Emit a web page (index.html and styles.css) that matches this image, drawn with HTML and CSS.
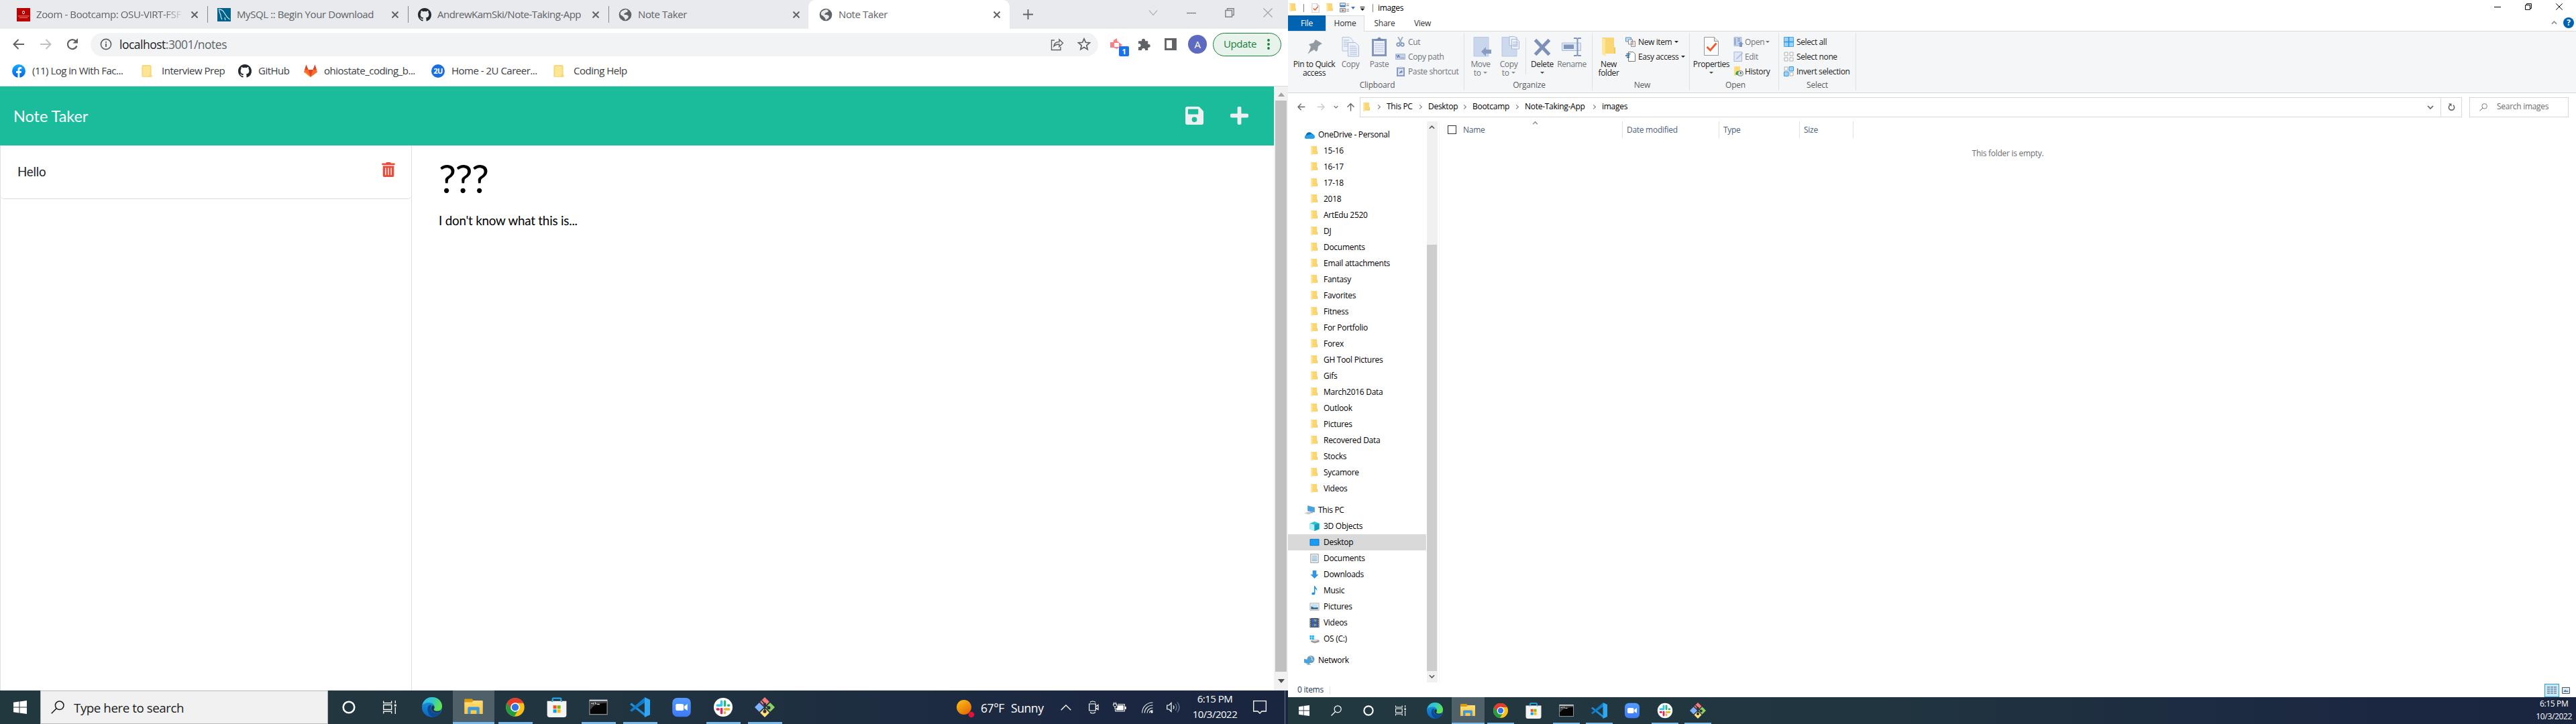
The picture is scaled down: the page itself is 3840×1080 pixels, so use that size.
FILE: index.html
```html
<!DOCTYPE html>
<html lang="en">
<head>
<meta charset="utf-8">
<title>Note Taker</title>
<link rel="stylesheet" href="styles.css">
</head>
<body>
<svg class="defs" width="0" height="0">
<defs>
<linearGradient id="gEdge" x1="0" y1="0" x2="1" y2="0.4"><stop offset="0" stop-color="#2fb4f0"/><stop offset=".55" stop-color="#35c9c4"/><stop offset="1" stop-color="#62e34e"/></linearGradient>
<linearGradient id="gEdge2" x1="0" y1="0" x2="0" y2="1"><stop offset="0" stop-color="#1b9de2"/><stop offset="1" stop-color="#0b62bd"/></linearGradient>
<linearGradient id="gFold" x1="0" y1="0" x2="0" y2="1"><stop offset="0" stop-color="#ffdd75"/><stop offset="1" stop-color="#fdc53c"/></linearGradient>
<linearGradient id="gSun" x1="0" y1="0" x2=".7" y2="1"><stop offset="0" stop-color="#fcc419"/><stop offset="1" stop-color="#e66a05"/></linearGradient>
<linearGradient id="gZoom" x1="0" y1="0" x2="0" y2="1"><stop offset="0" stop-color="#549bff"/><stop offset="1" stop-color="#3d79f5"/></linearGradient>
<linearGradient id="gFb" x1="0" y1="0" x2="0" y2="1"><stop offset="0" stop-color="#18acfe"/><stop offset="1" stop-color="#0163e0"/></linearGradient>
</defs>
<symbol id="x" viewBox="0 0 12 12"><path d="M1.5 1.5l9 9M10.5 1.5l-9 9" fill="none" stroke="currentColor" stroke-width="2"/></symbol>
<symbol id="globe" viewBox="0 0 20 20"><circle cx="10" cy="10" r="9.3" fill="#5f6368"/><path d="M8 3l3-1 3 2-1 2-3 1-2 2 1 1 3 0 3 2-1 3-4 3-1-3-3-3-3-2c-1-4 2-6 5-7z" fill="#fff" opacity=".85"/></symbol>
<symbol id="gh" viewBox="0 0 16 16"><path fill="#24292f" d="M8 0C3.58 0 0 3.58 0 8c0 3.54 2.29 6.53 5.47 7.59.4.07.55-.17.55-.38 0-.19-.01-.82-.01-1.49-2.01.37-2.53-.49-2.69-.94-.09-.23-.48-.94-.82-1.13-.28-.15-.68-.52-.01-.53.63-.01 1.08.58 1.23.82.72 1.21 1.87.87 2.33.66.07-.52.28-.87.51-1.07-1.78-.2-3.64-.89-3.64-3.95 0-.87.31-1.59.82-2.15-.08-.2-.36-1.02.08-2.12 0 0 .67-.21 2.2.82a7.6 7.6 0 014 0c1.53-1.04 2.2-.82 2.2-.82.44 1.1.16 1.92.08 2.12.51.56.82 1.27.82 2.15 0 3.07-1.87 3.75-3.65 3.95.29.25.54.73.54 1.48 0 1.07-.01 1.93-.01 2.2 0 .21.15.46.55.38A8 8 0 0016 8c0-4.42-3.58-8-8-8z"/></symbol>
<symbol id="bfold" viewBox="0 0 16 20"><path d="M0 2q0-2 2-2h11q2 0 2 2v13l1 1v2q0 1-2 1H2q-2 0-2-2z" fill="#f9d877"/><path d="M2 2h11v13h-2v3H2z" fill="#fde596"/></symbol>
<symbol id="fold" viewBox="0 0 20 28"><path d="M0 0h18v14l2 1v9H4z" fill="#f3c65c"/><path d="M4 0h14v24H4z" fill="#fbd674"/><path d="M0 0l5 2v22l1 4-6-3z" fill="#ffe69c"/></symbol>
<symbol id="check" viewBox="0 0 22 28"><path d="M.5.5h15l6 6v21H.5z" fill="#fbfbfb" stroke="#999"/><path d="M15.500.5v6h6" fill="#e6e6e6" stroke="#999"/><path d="M4.500 15l5 5 9-10.500" fill="none" stroke="#f1592a" stroke-width="2.800"/></symbol>
<symbol id="win" viewBox="0 0 20 20"><path fill="#fff" d="M0 2.700l8.500-1.200v8H0zM9.500 1.400L20 0v9.500H9.500zM0 10.500h8.500v8L0 17.300zM9.500 10.500H20V20l-10.500-1.400z"/></symbol>
<symbol id="mag" viewBox="0 0 20 20"><circle cx="12.700" cy="7.300" r="6.300" fill="none" stroke="currentColor" stroke-width="1.500"/><path d="M8.200 11.800L.7 19.300" stroke="currentColor" stroke-width="1.600"/></symbol>
<symbol id="cort" viewBox="0 0 20 20"><circle cx="10" cy="10" r="8.300" fill="none" stroke="#fff" stroke-width="2.600"/></symbol>
<symbol id="tview" viewBox="0 0 20 20"><path d="M.7.500v3.200h12V.500M.7 19.500v-3.200h12v3.200M.7 6.500h12v7H.7zM18.300 0v4M18.300 10v10" fill="none" stroke="#fff" stroke-width="1.300"/><path d="M16.800 5.700h3v3h-3z" fill="#fff"/></symbol>
<symbol id="edge" viewBox="0 0 24 24"><circle cx="12" cy="12" r="12" fill="url(#gEdge2)"/><path d="M.3 10C1.500 4 6 0 12 0c7 0 12 5 12 10.500 0 4-3 6-6 6-2.500 0-4-.8-4-1.800 0-.8 1-1.200 1-3.200C15 8.500 12 6.300 8.500 6.300 4.500 6.300 1.500 8 .3 10z" fill="url(#gEdge)"/><path d="M8.500 9.500C5 13 6.500 21 13 23.700c4 0 7.500-2.500 9.300-5.700-5 2.500-11 1-12-4-.3-2 .2-3 1.200-4.300-1-.6-2-.7-3-.2z" fill="#0c4a93"/><path d="M14 14.800c0 1.500 3.500 3 8.300.7l-.5 2.300C17 20 11.500 17.500 11 13.500c0-1.500.6-3 2-3.500 1.500.5 2 1.500 1.900 2.700-.3 1-.9 1.300-.9 2.100z" fill="#22363f"/></symbol>
<symbol id="expl" viewBox="0 0 24 24"><path d="M1 3q0-1 1-1h8l2 2v3H1z" fill="#dd9b0c"/><path d="M1 6h9l2-2h10q1 0 1 1v15H1z" fill="url(#gFold)"/><path d="M5 20v-7q0-1.500 1.500-1.500h11q1.500 0 1.500 1.500v7h-3.500v-4.500h-7V20z" fill="#3c97de"/></symbol>
<symbol id="chrome" viewBox="0 0 24 24"><circle cx="12" cy="12" r="11" fill="#fbc116"/><path d="M12 12L2.500 6.500A11 11 0 0121.600 6.700H12z" fill="#e33b2e"/><path d="M2.500 6.500A11 11 0 0011 23l5-8.500H8z" fill="#249a41"/><path d="M2.500 6.500l5 8.500 4.500-8.300h9.600A11 11 0 002.500 6.500z" fill="#e33b2e"/><circle cx="12" cy="12" r="5.500" fill="#fff"/><circle cx="12" cy="12" r="4.200" fill="#2f74e8"/></symbol>
<symbol id="store" viewBox="0 0 24 24"><path d="M7 7V2q0-.8.800-.8h8.400q.8 0 .8.800v5" fill="none" stroke="#1fa7ea" stroke-width="1.800"/><path d="M.5 4.500h23V21q0 3-3 3h-17q-3 0-3-3z" fill="#f4f4f4"/><path d="M6.500 4.500v1M17.500 4.500v1" stroke="#1fa7ea" stroke-width="1.800"/><path d="M7.700 9.800h4v4h-4z" fill="#f25022"/><path d="M12.500 9.800h4v4h-4z" fill="#7fba00"/><path d="M7.700 14.600h4v4h-4z" fill="#00a4ef"/><path d="M12.500 14.600h4v4h-4z" fill="#ffb900"/></symbol>
<symbol id="cmd" viewBox="0 0 24 24"><path d="M1 3h22v18H1z" fill="#8f8f8f"/><path d="M1.500 3h21v1.500h-21z" fill="#ccd3e0"/><path d="M2 5h20v15H2z" fill="#050505"/><path d="M2 5h20v2C13 7 6 9 3.500 14H2z" fill="#444"/><path d="M3.500 7.500h1.500M6 6.500v2M8 6l1.200 2.500M10.500 8.500h3" stroke="#ddd" stroke-width=".9"/></symbol>
<symbol id="code" viewBox="0 0 24 24"><path d="M0 8.500l2-1.800 16 12.800V23z" fill="#1d8fdc"/><path d="M0 15.500L17 .8l1.500 5L2 17.300z" fill="#0f7cc7"/><path d="M17.500 0L24 3v18l-6.500 3z" fill="#30a7f0"/></symbol>
<symbol id="zoomi" viewBox="0 0 24 24"><rect x="1" y=".7" width="22" height="22.600" rx="6" fill="url(#gZoom)"/><rect x="5" y="8" width="9.500" height="8" rx="1.800" fill="#fff"/><path d="M15.300 10.700L19 8v8l-3.700-2.700z" fill="#fff"/></symbol>
<symbol id="slack" viewBox="0 0 24 24"><circle cx="12" cy="12" r="11.200" fill="#fff"/><g fill="none" stroke-width="2.800" stroke-linecap="round"><path d="M10 5v4.300M5 9.800h5" stroke="#36c5f0"/><path d="M14 5v5M19 9.800h-1" stroke="#2eb67d"/><path d="M14 14.300h5M14 19v-1" stroke="#ecb22e"/><path d="M10 14v5M5 14.300h1.500" stroke="#e01e5a"/></g></symbol>
<symbol id="git" viewBox="0 0 24 24"><path d="M12 0l6 6-6 6-6-6z" fill="#f57b7b"/><path d="M24 12l-6 6-6-6 6-6z" fill="#8cd161"/><path d="M12 24l-6-6 6-6 6 6z" fill="#ffe07a"/><path d="M0 12l6-6 6 6-6 6z" fill="#80b3ff"/><path d="M8.500 4L12 8v10M12 9l5 3.500M5.500 5.500l13 13M18.500 5.500l-13 13" stroke="#26313b" stroke-width="1.300" fill="none"/><circle cx="12" cy="8.300" r="1.700" fill="#26313b"/><circle cx="12" cy="17" r="2" fill="#26313b"/><circle cx="16.800" cy="12.500" r="2" fill="#26313b"/></symbol>
<symbol id="up" viewBox="0 0 10 6"><path d="M1 5l4-4 4 4" fill="none" stroke="currentColor" stroke-width="1.700"/></symbol>
<symbol id="dn" viewBox="0 0 10 6"><path d="M1 1l4 4 4-4" fill="none" stroke="currentColor" stroke-width="1.700"/></symbol>
<symbol id="restore" viewBox="0 0 12 12"><path d="M.7 3h8.300v8.300H.7zM3 3V.7h8.300V9H9" fill="none" stroke="currentColor" stroke-width="1.200"/></symbol>
<symbol id="arrow" viewBox="0 0 18 16"><path d="M17 8H2M8.500 1L1.500 8l7 7" fill="none" stroke="currentColor" stroke-width="2"/></symbol>
<symbol id="doc" viewBox="0 0 14 16"><path d="M.5.5h13v15H.5z" fill="#f4f4f4" stroke="#8b8b8b"/><path d="M2.500 4h9M2.500 7h9M2.500 9.500h9M2.500 12h9" stroke="#4a9bd4"/></symbol>
</svg>

<main class="desktop">
<!-- Left display: browser -->
<section class="screen left">
  <div class="tabs">
    <div class="tab"><svg class="fav" viewBox="0 0 20 20"><path d="M0 0h20v20H0z" fill="#b00"/><ellipse cx="10" cy="6.500" rx="1.500" ry="2.300" fill="none" stroke="#fff"/><path d="M1.500 12h17M4 14.500h12" stroke="#e88" stroke-width="1.200"/></svg><span class="tt fade">Zoom - Bootcamp: OSU-VIRT-FSF</span><svg class="cl"><use href="#x"/></svg></div>
    <div class="tab"><svg class="fav" viewBox="0 0 20 20"><path d="M0 0h20v20H0z" fill="#00618a"/><path d="M1.500 2c5-1 8 3 10 7s4 6 7 8M3 3c-1 4 2 5 2 8s1 4 2 6M12 18l-1-4" fill="none" stroke="#cfe3ee" stroke-width="1.200"/></svg><span class="tt">MySQL :: Begin Your Download</span><svg class="cl"><use href="#x"/></svg></div>
    <div class="tab"><svg class="fav"><use href="#gh"/></svg><span class="tt long">AndrewKamSki/Note-Taking-App</span><svg class="cl"><use href="#x"/></svg></div>
    <div class="tab last"><svg class="fav"><use href="#globe"/></svg><span class="tt">Note Taker</span><svg class="cl"><use href="#x"/></svg></div>
    <div class="tab active"><svg class="fav"><use href="#globe"/></svg><span class="tt">Note Taker</span><svg class="cl"><use href="#x"/></svg></div>
    <svg class="plus" viewBox="0 0 16 16"><path d="M8 0v16M0 8h16" stroke="#5f6368" stroke-width="2"/></svg>
    <div class="wc">
      <svg viewBox="0 0 14 14"><path d="M1 3.500l6 7 6-7" fill="none" stroke="#a0a2a6" stroke-width="1.100"/></svg>
      <svg viewBox="0 0 14 14"><path d="M0 7.500h14" stroke="#7c7e82" stroke-width="1.300"/></svg>
      <svg><use href="#restore"/></svg>
      <svg viewBox="0 0 14 14"><path d="M.5.500l13 13M13.500.500l-13 13" stroke="#a0a2a6" stroke-width="1.100"/></svg>
    </div>
  </div>
  <div class="tools">
    <svg class="ar"><use href="#arrow"/></svg><svg class="ar fw"><use href="#arrow"/></svg>
    <svg class="rl" viewBox="0 0 18 18"><path d="M15.500 11.500A7 7 0 1 1 14 4.200" fill="none" stroke="#5f6368" stroke-width="2.200"/><path d="M17 0v7.500H9.500z" fill="#5f6368"/></svg>
    <div class="omni">
      <svg class="inf" viewBox="0 0 18 18"><circle cx="9" cy="9" r="7.600" fill="none" stroke="#5f6368" stroke-width="1.600"/><path d="M9 8v5M9 5v1.700" stroke="#5f6368" stroke-width="1.900"/></svg>
      <span class="url">localhost<i>:3001/notes</i></span>
      <svg class="sh" viewBox="0 0 20 20"><path d="M6 4H1.500v14.500H15V14M5 13c.5-4.500 3.500-6.500 8-6.500V3l5.500 5.300L13 13.500V10c-4 0-6 .8-8 3z" fill="none" stroke="#5f6368" stroke-width="1.400"/></svg>
      <svg class="st" viewBox="0 0 20 20"><path d="M10 1.800l2.400 5.500 6 .5-4.600 4 1.400 5.900L10 14.600l-5.200 3.100 1.400-5.900-4.600-4 6-.5z" fill="none" stroke="#5f6368" stroke-width="1.700"/></svg>
    </div>
    <div class="ext"><svg viewBox="0 0 20 20"><path d="M0 6h5V3l5-3v4l8 6-8 6-5-2H0z" fill="#fb7f80"/><path d="M6 7h7v6H6z" fill="#fff"/></svg><b>1</b></div>
    <svg class="pz" viewBox="0 0 20 20"><path d="M2 5h4.500a2.700 2.700 0 115 0H16v5a2.700 2.700 0 110 5v4.500h-4.500a2.600 2.600 0 10-5 0H1V14a2.600 2.600 0 100-4.500V5z" fill="#5f6368"/></svg>
    <svg class="sp" viewBox="0 0 18 18"><path d="M1.500 1.500h15v15h-15z" fill="#fff" stroke="#5f6368" stroke-width="2.800"/><path d="M11 2h6v14h-6z" fill="#5f6368"/></svg>
    <div class="av">A</div>
    <div class="upd"><span>Update</span><svg viewBox="0 0 4 16"><g fill="#188038"><circle cx="2" cy="2" r="1.900"/><circle cx="2" cy="8" r="1.900"/><circle cx="2" cy="14" r="1.900"/></g></svg></div>
  </div>
  <div class="marks">
    <div class="m m1"><svg viewBox="0 0 20 20"><circle cx="10" cy="10" r="10" fill="url(#gFb)"/><path d="M8.500 20v-7H6v-3h2.500V8c0-2.600 1.500-4 4-4l1.700.2v2.600h-1.400c-1.200 0-1.500.7-1.500 1.500V10h2.800l-.5 3h-2.300v7z" fill="#fff"/></svg><span>(11) Log in With Fac...</span></div>
    <div class="m m2"><svg class="bf"><use href="#bfold"/></svg><span>Interview Prep</span></div>
    <div class="m m3"><svg><use href="#gh"/></svg><span>GitHub</span></div>
    <div class="m m4"><svg viewBox="0 0 20 20"><path d="M10 19L0 11.500 3.500.5 6.500 8h7l3-7.500 3.500 11z" fill="#fc6d26"/><path d="M3.500.5L6.500 8h-5.300zM16.500.5L13.500 8h5.300zM10 19L6.500 8h7z" fill="#e24329"/><path d="M0 11.500L10 19 3 12z" fill="#fca326"/></svg><span>ohiostate_coding_b...</span></div>
    <div class="m m5"><div class="u2">2U</div><span>Home - 2U Career...</span></div>
    <div class="m"><svg class="bf"><use href="#bfold"/></svg><span>Coding Help</span></div>
  </div>
  <div class="view">
    <div class="app">
      <header class="nav"><span class="brand">Note Taker</span>
        <svg class="save" viewBox="0 0 448 448"><path fill="#ecf0f1" d="M434 98L350 14a48 48 0 00-34-14H48A48 48 0 000 48v352a48 48 0 0048 48h352a48 48 0 0048-48V132a48 48 0 00-14-34zM224 384a64 64 0 110-128 64 64 0 010 128zm96-304v100a12 12 0 01-12 12H76a12 12 0 01-12-12V76a12 12 0 0112-12h228a12 12 0 018 4l5 4a12 12 0 013 8z"/></svg>
        <svg class="add" viewBox="0 0 448 448"><path fill="#ecf0f1" d="M416 176H272V32a32 32 0 00-32-32h-32a32 32 0 00-32 32v144H32a32 32 0 00-32 32v32a32 32 0 0032 32h144v144a32 32 0 0032 32h32a32 32 0 0032-32V272h144a32 32 0 0032-32v-32a32 32 0 00-32-32z"/></svg>
      </header>
      <div class="body">
        <aside class="list"><div class="note"><span>Hello</span><svg viewBox="0 0 448 512"><path fill="#e74c3c" fill-rule="evenodd" d="M32 464a48 48 0 0048 48h288a48 48 0 0048-48V128H32zm272-256a16 16 0 0132 0v224a16 16 0 01-32 0zm-96 0a16 16 0 0132 0v224a16 16 0 01-32 0zm-96 0a16 16 0 0132 0v224a16 16 0 01-32 0zM432 32H312l-9-19a24 24 0 00-22-13H167a24 24 0 00-22 13l-9 19H16A16 16 0 000 48v32a16 16 0 0016 16h416a16 16 0 0016-16V48a16 16 0 00-16-16z"/></svg></div></aside>
        <article><h1>???</h1><p>I don't know what this is...</p></article>
      </div>
    </div>
    <div class="sb"><svg viewBox="0 0 10 6"><path d="M0 6l5-6 5 6z" fill="#a3a3a3"/></svg><div class="thumb"></div><svg viewBox="0 0 10 6"><path d="M0 0l5 6 5-6z" fill="#505050"/></svg></div>
  </div>
  <footer class="task">
    <div class="c start"><svg class="s"><use href="#win"/></svg></div>
    <div class="search"><svg><use href="#mag"/></svg><span>Type here to search</span></div>
    <div class="c"><svg class="s"><use href="#cort"/></svg></div>
    <div class="c tv"><svg class="s"><use href="#tview"/></svg></div>
    <div class="c"><svg><use href="#edge"/></svg></div>
    <div class="c on cur"><svg><use href="#expl"/></svg></div>
    <div class="c on"><svg><use href="#chrome"/></svg></div>
    <div class="c"><svg><use href="#store"/></svg></div>
    <div class="c on"><svg><use href="#cmd"/></svg></div>
    <div class="c on"><svg><use href="#code"/></svg></div>
    <div class="c"><svg><use href="#zoomi"/></svg></div>
    <div class="c on"><svg><use href="#slack"/></svg></div>
    <div class="c on"><svg><use href="#git"/></svg></div>
    <svg class="sun" viewBox="0 0 28 30"><circle cx="11" cy="11" r="11" fill="url(#gSun)"/><circle cx="22" cy="22" r="4.300" fill="#e0123c"/></svg>
    <span class="w1">67°F</span><span class="w2">Sunny</span>
    <div class="tray">
      <svg class="t1" viewBox="0 0 16 9"><path d="M.7 8.300L8 1l7.300 7.300" fill="none" stroke="#fff" stroke-width="1.300"/></svg>
      <svg class="t2" viewBox="0 0 15 20"><path d="M.7 5h9.600v10H.7zM10.500 9l3.500-2.500v7L10.500 11M2 2.500q3.500-3 8 0M2 17.500q3.500 3 8 0" fill="none" stroke="#fff" stroke-width="1.200"/></svg>
      <svg class="t3" viewBox="0 0 20 16"><path d="M7 3.500h10.500V14H3.500V9" fill="none" stroke="#fff"/><path d="M6.500 5h9.500v7.500H5V9h1.500zM18 7h1.700v4H18z" fill="#fff"/><path d="M.5 3h5v2.500L4 7H2L.5 5.500zM1.700.5v2.500M4.300.5v2.500M3 7v3" fill="none" stroke="#fff"/></svg>
      <svg class="t4" viewBox="0 0 17 17"><g fill="none" stroke="#e6e8ec" stroke-width="1.200"><path d="M.6 16.500C.6 8 7 1 16.500 1M4.300 16.500c0-6 5-11.500 12.200-11.500M8 16.500c0-4 3.500-7.500 8.500-7.500M11.500 16.500c0-2 2-4 5-4"/></g><circle cx="15" cy="15" r="1.700" fill="#fff"/></svg>
      <svg class="t5" viewBox="0 0 21 18"><path d="M.7 6h3L7 2.500v13L3.700 12h-3z" fill="none" stroke="#fff" stroke-width="1.200"/><path d="M10 6.500q2 2.500 0 5" stroke="#fff" fill="none" stroke-width="1.200"/><path d="M13 4q4 5 0 10M16 1.500q6 7.500 0 15" stroke="#78829a" fill="none" stroke-width="1.200"/></svg>
      <div class="clock"><span>6:15 PM</span><span>10/3/2022</span></div>
      <svg class="t6" viewBox="0 0 20 20"><path d="M.7.700h18.600v15.300H13L10 19l-3-3H.7z" fill="none" stroke="#fff" stroke-width="1.300"/></svg>
    </div>
  </footer>
</section>

<!-- Right display: file explorer -->
<section class="screen right">
  <div class="title">
    <svg class="q1"><use href="#fold"/></svg><hr><svg class="q2"><use href="#check"/></svg><svg class="q3"><use href="#fold"/></svg>
    <svg class="q4" viewBox="0 0 14 15"><path d="M.5.500h8v5.500h-8zM.5 8.500h8V14h-8z" fill="#bfe0f5" stroke="#888"/><path d="M1 4h7v2H1z" fill="#2f7fc0"/><path d="M3 10l4 1-3 2z" fill="#d94b2b"/><path d="M10 2h4M10 4.500h4M10 10h4M10 12.500h4" stroke="#8a8a8a"/></svg>
    <svg class="q5" viewBox="0 0 6 4"><path d="M0 0h6L3 4z" fill="#3c78b8"/></svg>
    <svg class="q6" viewBox="0 0 8 7"><path d="M0 0h8v1.200H0zM0 3h8L4 7z" fill="#111"/></svg><hr class="h2">
    <span>images</span>
    <div class="wc2"><svg viewBox="0 0 10 10"><path d="M0 5.500h10" stroke="#000"/></svg><svg><use href="#restore"/></svg><svg viewBox="0 0 10 10"><path d="M.3.300l9.400 9.400M9.700.300L.3 9.700" stroke="#000"/></svg></div>
  </div>
  <div class="rtabs"><b>File</b><span class="home">Home</span><span class="share">Share</span><span class="vw">View</span><svg class="col"><use href="#up"/></svg><i>?</i></div>
  <div class="ribbon">
    <div class="g g1"><div class="row">
      <div class="big w70 k"><svg viewBox="0 0 32 32"><path d="M18 5l10 6-2 1-4 3-1 6-2 2-5-5-7 9 4-11-3-4 7-2z" fill="#929ba1"/><path d="M14 17l-8 9 10-6z" fill="#929ba1"/></svg><span>Pin to Quick<br>access</span></div>
      <div class="big w38"><svg viewBox="0 0 32 32"><path d="M4 1.500h11l5 5V22H4z" fill="#edf2fa" stroke="#b5c2dc"/><path d="M12.500 9.500h11l5 5V30h-16z" fill="#edf2fa" stroke="#aebcd9"/><path d="M6 6h8M6 9h6M6 12h6M6 15h6M15 15h9M15 18h11M15 21h11M15 24h11M15 27h11" stroke="#a9b9d8"/></svg><span>Copy</span></div>
      <div class="big w48"><svg viewBox="0 0 32 32"><path d="M5 4h22v26H5z" fill="#8496bb"/><path d="M8 7h16v20H8z" fill="#edf2fa"/><path d="M10 7V4h3q3-5 6 0h3v3z" fill="#7488b2"/><path d="M9 11h14M9 14h14M9 17h14M9 20h14M9 23h14" stroke="#b4c3df"/></svg><span>Paste</span></div>
      <div class="smalls">
        <div><svg viewBox="0 0 15 15"><path d="M4 0l5 9M11 0L6 9" stroke="#9aa8c4" stroke-width="1.700"/><circle cx="4.500" cy="11.500" r="2.300" fill="none" stroke="#8194bd" stroke-width="1.700"/><circle cx="10.500" cy="11.500" r="2.300" fill="none" stroke="#8194bd" stroke-width="1.700"/></svg>Cut</div>
        <div><svg viewBox="0 0 15 15"><path d="M.5 3.500h14v8H.5z" fill="#c3d0e8" stroke="#a9b9d4"/><path d="M2 5l1.500 4L5 5l1.500 4M8 9.500h1M10 9.500h1M12 9.500h1" stroke="#4f6796" fill="none"/></svg>Copy path</div>
        <div><svg viewBox="0 0 15 15"><path d="M2 1.500h12V15H2z" fill="#8b9cc0"/><path d="M4 3.500h8v9.500H4zM6 0h4v2H6z" fill="#dce5f5"/><path d="M6 11q0-4 3-4V5l2 3-2 2.500V9" fill="#6f85b4"/></svg>Paste shortcut</div>
      </div></div><em>Clipboard</em></div>
    <div class="g g2"><div class="row">
      <div class="big w42"><svg viewBox="0 0 32 32"><path d="M6 1.500h22V30H6z" fill="#c9d6ec" stroke="#b9c9e4"/><path d="M17 23l7-7v4h8v6h-8v4z" fill="#8b9cbf"/></svg><span>Move<br>to <u class="d"></u></span></div>
      <div class="big w42"><svg viewBox="0 0 32 32"><path d="M6 1.500h22V30H6z" fill="#ccd9ee" stroke="#b9c9e4"/><path d="M17 .5h8l3 3V14H17zM20.500 4.500h8l3 3V19h-11z" fill="#edf2fa" stroke="#a9b9d8"/><path d="M22 9h8M22 12h8M22 15h8" stroke="#a9b9d8"/></svg><span>Copy<br>to <u class="d"></u></span></div>
      <div class="vr"></div>
      <div class="big w42 k"><svg viewBox="0 0 32 32"><path d="M5.500 5.500l21 22M26.500 5.500l-21 22" stroke="#7c90b8" stroke-width="5"/></svg><span>Delete<br><u class="d"></u></span></div>
      <div class="big w46"><svg viewBox="0 0 32 32"><path d="M1.500 10h28v11.500h-28z" fill="#e1e9f6" stroke="#a9b9d8"/><path d="M4 12.500h15v6.500H4z" fill="#8194bd"/><path d="M19 3h4l1.500 1L26 3h4M24.500 4v24M19 29h4l1.500-1 1.500 1h4" stroke="#8194bd" stroke-width="2" fill="none"/></svg><span>Rename</span></div>
      </div><em>Organize</em></div>
    <div class="g g3"><div class="row">
      <div class="big w40 k"><svg class="nf"><use href="#fold"/></svg><span>New<br>folder</span></div>
      <div class="smalls k p5">
        <div><svg viewBox="0 0 15 15"><path d="M.5 1h8v6h-8z" fill="#bfe0f5" stroke="#5f93ba"/><path d="M4.500 4h6v7h-6zM8.500 6.500h6v8h-6z" fill="#f6f6f6" stroke="#8d8d8d"/><path d="M10 9h3M10 12h3" stroke="#e58f7d"/></svg>New item <u class="d"></u></div>
        <div><svg viewBox="0 0 15 15"><path d="M4.500.500h7l3 3v11h-10z" fill="#fff" stroke="#777"/><path d="M1.500 3.500h6M0 6h6M2 8.500h4" stroke="#1c639b" stroke-width="1.300"/></svg>Easy access <u class="d"></u></div>
      </div></div><em>New</em></div>
    <div class="g g4"><div class="row">
      <div class="big w56 k"><svg class="ck"><use href="#check"/></svg><span>Properties<br><u class="d"></u></span></div>
      <div class="smalls p5 n">
        <div><svg viewBox="0 0 15 15"><path d="M1 .5h11v13H1z" fill="#c6d3ea" stroke="#a9b9d8"/><path d="M2.500 2v10M6 3h4M6 6h4" stroke="#7f94bf" stroke-width="1.500"/><path d="M9 15V11H7l4-4 4 4h-2v4z" fill="#7f94bf"/></svg>Open <u class="d"></u></div>
        <div><svg viewBox="0 0 15 15"><path d="M1 .5h11.500v14H1z" fill="#e1e9f6" stroke="#a9b9d8"/><path d="M3 12l2-3 8-8 1.500 1.500-8 8z" fill="#b5c4df"/></svg>Edit</div>
        <div class="k"><svg viewBox="0 0 15 15"><path d="M1 0h9v12l-5 1-4 1z" fill="#ffdb7a"/><path d="M3 12q1-6 6-5v7z" fill="#2aa34a"/><circle cx="10.500" cy="10.500" r="4" fill="#d9e0dd" stroke="#7b8a83"/><path d="M10.500 8v3l2-1.500" stroke="#46524c" fill="none"/></svg>History</div>
      </div></div><em>Open</em></div>
    <div class="g g5"><div class="row">
      <div class="smalls k p8">
        <div><svg viewBox="0 0 15 15"><path d="M.5.500h14v14H.5z" fill="#9bd3fa" stroke="#4ba3e8"/><path d="M7.500 0v15M0 7.500h15" stroke="#2f93e2" stroke-width="1.600"/></svg>Select all</div>
        <div><svg viewBox="0 0 15 15"><path d="M1 1h5v5H1zM9 1h5v5H9zM1 9h5v5H1zM9 9h5v5H9z" fill="#fafafa" stroke="#b0b0b0"/></svg>Select none</div>
        <div><svg viewBox="0 0 15 15"><path d="M1 1h5v5H1zM9 9h5v5H9z" fill="#fafafa" stroke="#b0b0b0"/><path d="M8 .5h6.500V7H8zM.5 8H7v6.500H.5z" fill="#9bd3fa" stroke="#3a98e4"/></svg>Invert selection</div>
      </div></div><em>Select</em></div>
  </div>
  <div class="addr">
    <svg class="a1"><use href="#arrow"/></svg><svg class="a2"><use href="#arrow"/></svg><svg class="a3"><use href="#dn"/></svg><svg class="a4"><use href="#arrow"/></svg>
    <div class="path"><svg class="pf"><use href="#fold"/></svg><s></s><span class="p1">This PC</span><s></s><span class="p2">Desktop</span><s></s><span class="p3">Bootcamp</span><s></s><span class="p4">Note-Taking-App</span><s></s><span>images</span>
      <svg class="pd"><use href="#dn"/></svg><div class="rf"><svg viewBox="0 0 12 12"><path d="M8.500 2.500a4.500 4.500 0 11-5 0" fill="none" stroke="#666" stroke-width="1.700"/><path d="M1 0h5v5z" fill="#666"/></svg></div></div>
    <div class="sbox"><svg><use href="#mag"/></svg><span>Search images</span></div>
  </div>
  <div class="main">
    <nav class="tree">
      <div class="r"><svg class="od" viewBox="0 0 16 11"><path d="M3 5A5 5 0 0112 3.500 4 4 0 0114 10H3A3 3 0 013 5z" fill="#0f6cbd"/><path d="M1 10Q0 6 4 6l4-1q3-2 5 0 3 0 3 3 0 3-3 3H3q-1.500 0-2-1z" fill="#28a1e8"/></svg>OneDrive - Personal</div>
      <div class="f"><svg><use href="#fold"/></svg>15-16</div>
      <div class="f"><svg><use href="#fold"/></svg>16-17</div>
      <div class="f"><svg><use href="#fold"/></svg>17-18</div>
      <div class="f"><svg><use href="#fold"/></svg>2018</div>
      <div class="f"><svg><use href="#fold"/></svg>ArtEdu 2520</div>
      <div class="f"><svg><use href="#fold"/></svg>DJ</div>
      <div class="f"><svg><use href="#fold"/></svg>Documents</div>
      <div class="f"><svg><use href="#fold"/></svg>Email attachments</div>
      <div class="f"><svg><use href="#fold"/></svg>Fantasy</div>
      <div class="f"><svg><use href="#fold"/></svg>Favorites</div>
      <div class="f"><svg><use href="#fold"/></svg>Fitness</div>
      <div class="f"><svg><use href="#fold"/></svg>For Portfolio</div>
      <div class="f"><svg><use href="#fold"/></svg>Forex</div>
      <div class="f"><svg><use href="#fold"/></svg>GH Tool Pictures</div>
      <div class="f"><svg><use href="#fold"/></svg>Gifs</div>
      <div class="f"><svg><use href="#fold"/></svg>March2016 Data</div>
      <div class="f"><svg><use href="#fold"/></svg>Outlook</div>
      <div class="f"><svg><use href="#fold"/></svg>Pictures</div>
      <div class="f"><svg><use href="#fold"/></svg>Recovered Data</div>
      <div class="f"><svg><use href="#fold"/></svg>Stocks</div>
      <div class="f"><svg><use href="#fold"/></svg>Sycamore</div>
      <div class="f"><svg><use href="#fold"/></svg>Videos</div>
      <div class="r gap"><svg viewBox="0 0 16 14"><path d="M5.500.500l10 2.500v7l-10-2z" fill="#3aa5ee" stroke="#8a98a5" stroke-width=".8"/><path d="M0 11.500l6-2 6 1.500-5 2.500z" fill="#c3ccd4"/><path d="M8 9l5 1v1.500l-4-1z" fill="#9aa7b3"/></svg>This PC</div>
      <div class="o"><svg viewBox="0 0 15 15"><path d="M0 3l7.500-3L15 3v9l-7.500 3L0 12z" fill="#2fc1d6"/><path d="M0 3l7.500 2v10L0 12z" fill="#b4eef2"/><path d="M7.500 5L15 3v9l-7.500 3z" fill="#0fa0bd"/></svg>3D Objects</div>
      <div class="o sel"><svg viewBox="0 0 15 15"><path d="M.5 2.500h14v10H.5z" fill="#1a9bf5" stroke="#0f74bd"/></svg>Desktop</div>
      <div class="o"><svg><use href="#doc"/></svg>Documents</div>
      <div class="o"><svg viewBox="0 0 15 15"><path d="M4.500 1h6v6.500H14L7.500 14 1 7.500h3.500z" fill="#3393e6"/></svg>Downloads</div>
      <div class="o"><svg viewBox="0 0 15 15"><path d="M7 0h1.500c0 3 4 3.500 3 8-1-3-2-3-3-3.500V12c0 3-5.500 3-5.500.5C3 10.500 5 10 7 10.500z" fill="#1793ea"/></svg>Music</div>
      <div class="o"><svg viewBox="0 0 15 15"><path d="M.5 2h14v11H.5z" fill="#fff" stroke="#a0a0a0"/><path d="M2 3.500h11v8H2z" fill="#bfe2f7"/><path d="M2 7l5 2 6-.5v3H2z" fill="#33647c"/></svg>Pictures</div>
      <div class="o"><svg viewBox="0 0 15 15"><path d="M0 0h15v15H0z" fill="#4b4b4b"/><path d="M3 1h9v6H3zM3 8h9v6H3z" fill="#2e6fd0"/><path d="M6 2l5 1-2 3zM7 9l4 2-4 2z" fill="#d9a02c"/><path d="M1.300 0v15M13.700 0v15" stroke="#ddd" stroke-dasharray="1.500 1.500"/></svg>Videos</div>
      <div class="o"><svg viewBox="0 0 15 15"><path d="M0 2h3v3H0zM3.700 2h3v3h-3zM0 5.700h3v3H0zM3.700 5.700h3v3h-3z" fill="#10b2ee"/><path d="M2 10l5-2 8 1.500v3L8 14.500l-6-2z" fill="#9a9a9a"/><path d="M2 10l5-2 8 1.500-7 2z" fill="#dcdcdc"/></svg>OS (C:)</div>
      <div class="r gap"><svg viewBox="0 0 16 14"><circle cx="10" cy="5.500" r="5.500" fill="#5d9ec6"/><path d="M8 1l4 2-1 3 3 1" stroke="#cfe8f5" fill="none"/><path d="M0 5l8 2v6L0 10z" fill="#39a9ef" stroke="#7b99ad" stroke-width=".7"/><path d="M4 13l4 1 2-1" stroke="#9ab" fill="none"/></svg>Network</div>
    </nav>
    <div class="tsb"><svg><use href="#up"/></svg><div></div><svg><use href="#dn"/></svg></div>
    <div class="files">
      <div class="cols"><i class="cb"></i><div class="c1">Name<svg><use href="#up"/></svg></div><div class="c2">Date modified</div><div class="c3">Type</div><div class="c4">Size</div></div>
      <p>This folder is empty.</p>
    </div>
  </div>
  <div class="status"><span>0 items</span><hr>
    <div class="v1"><svg viewBox="0 0 14 11"><path d="M0 1h4M0 4h4M0 7h4M0 10h4M5 1h4M5 4h4M5 7h4M5 10h4M10 1h4M10 4h4M10 7h4M10 10h4" stroke="#31536b"/></svg></div><svg class="v2" viewBox="0 0 12 10"><path d="M.5.500h11v9H.5z" fill="#dbe9f2" stroke="#555"/><path d="M2 7l3-3 2 2 1-1 2 2z" fill="#3b7a9b"/></svg>
  </div>
  <footer class="task t2r">
    <div class="c q"><svg class="s"><use href="#win"/></svg></div>
    <div class="c q"><svg class="s wh"><use href="#mag"/></svg></div>
    <div class="c q"><svg class="s"><use href="#cort"/></svg></div>
    <div class="c q z"><svg class="s"><use href="#tview"/></svg></div>
    <div class="c"><svg><use href="#edge"/></svg></div>
    <div class="c on cur"><svg><use href="#expl"/></svg></div>
    <div class="c on"><svg><use href="#chrome"/></svg></div>
    <div class="c"><svg><use href="#store"/></svg></div>
    <div class="c on"><svg><use href="#cmd"/></svg></div>
    <div class="c on"><svg><use href="#code"/></svg></div>
    <div class="c"><svg><use href="#zoomi"/></svg></div>
    <div class="c on"><svg><use href="#slack"/></svg></div>
    <div class="c on"><svg><use href="#git"/></svg></div>
    <div class="clock"><span>6:15 PM</span><span>10/3/2022</span></div>
  </footer>
</section>
</main>
</body>
</html>
```
FILE: styles.css
```css
* { box-sizing: border-box; }
body { margin: 0; background: #fff; font-family: "Open Sans", "Noto Sans", sans-serif; white-space: nowrap; overflow: hidden; }
svg { display: block; flex: none; }
hr, p, h1 { margin: 0; border: 0; }
i, em, u, s { font-style: normal; text-decoration: none; }
.defs { position: absolute; }
.desktop { display: flex; width: 3840px; height: 1080px; }
.screen { width: 1920px; height: 1080px; display: flex; flex-direction: column; background: #fff; overflow: hidden; flex: none; }

/* Browser tab strip */
.left { font-size: 15px; letter-spacing: -.4px; color: #3c4043; }
.tabs { height: 43px; background: #e8eaed; display: flex; padding-left: 11px; flex: none; }
.tab { width: 299px; display: flex; align-items: center; padding-left: 14px; color: #5f6368; position: relative; }
.tab:not(.last):not(.active)::after { content: ""; position: absolute; right: 0; top: 9px; height: 25px; width: 1px; background: #85878a; }
.tab.active { background: #fff; border-radius: 10px 10px 0 0; margin-left: -2px; width: 300px; padding-left: 16px; }
.fav { width: 20px; height: 20px; margin-right: 9px; }
.tt { width: 222px; overflow: hidden; padding-bottom: 2px; }
.long { letter-spacing: -.5px; }
.fade { -webkit-mask-image: linear-gradient(90deg, #000 190px, transparent 220px); mask-image: linear-gradient(90deg, #000 190px, transparent 220px); }
.cl { width: 12px; height: 12px; margin-left: 8px; }
.plus { width: 15px; height: 15px; margin: 14px 0 0 20px; }
.wc { display: flex; gap: 43px; margin-left: 172px; padding-top: 12px; color: #808286; }
.wc svg { width: 14px; height: 14px; }

/* Address bar */
.tools { height: 46px; display: flex; align-items: center; flex: none; padding: 0 10px 0 19px; }
.ar { width: 18px; height: 16px; color: #5f6368; }
.fw { color: #bdc1c6; transform: scaleX(-1); margin-left: 22px; }
.rl { width: 18px; height: 18px; margin-left: 22px; }
.omni { width: 1502px; height: 35px; border-radius: 18px; background: #f1f3f4; margin-left: 18px; display: flex; align-items: center; padding-left: 14px; }
.inf { width: 18px; height: 18px; }
.url { font-size: 17.5px; letter-spacing: -.5px; color: #202124; margin-left: 11px; width: 1388px; }
.url i { color: #5f6368; }
.st { width: 20px; height: 20px; margin-left: 20px; }
.sh { width: 20px; height: 20px; }
.ext { width: 28px; height: 35px; margin-left: 18px; position: relative; }
.ext svg { width: 20px; height: 20px; margin-top: 8px; }
.ext b { position: absolute; right: 0; bottom: 0; width: 15px; height: 15px; border-radius: 2px; background: #1a73e8; color: #fff; font-size: 11px; line-height: 15px; text-align: center; }
.pz { width: 19px; height: 20px; margin-left: 13px; }
.sp { width: 18px; height: 18px; margin-left: 21px; }
.av { width: 28px; height: 28px; border-radius: 50%; background: #5c6bc0; color: #fff; text-align: center; line-height: 28px; margin-left: 17px; font-size: 15px; }
.upd { width: 102px; height: 35px; margin-left: 9px; border: 1.5px solid #188038; border-radius: 18px; background: #e8f3ec; color: #188038; display: flex; align-items: center; padding-left: 15px; }
.upd span { width: 65px; padding-bottom: 2px; }
.upd svg { width: 4px; height: 16px; }

/* Bookmarks */
.marks { height: 40px; display: flex; align-items: center; flex: none; padding: 0 0 5px 18px; border-bottom: 1px solid #dadce0; letter-spacing: -.5px; }
.m { display: flex; align-items: center; }
.m span { padding-bottom: 2px; }
.m svg { width: 20px; height: 20px; margin-right: 10px; }
.m .bf { width: 16px; height: 19px; margin: 0 14px 0 1px; }
.m1 { width: 192px; } .m2 { width: 145px; } .m3 { width: 98px; } .m4 { width: 190px; } .m5 { width: 181px; }
.u2 { width: 20px; height: 20px; border-radius: 50%; background: #1a6fdf; color: #fff; font-weight: 700; font-size: 11px; text-align: center; line-height: 20px; margin-right: 10px; }

/* Note taker page */
.view { display: flex; flex: 1; min-height: 0; }
.app { width: 1899px; display: flex; flex-direction: column; font-family: Lato, sans-serif; font-weight: 400; font-size: 18.75px; letter-spacing: -.2px; color: #000; }
.nav { height: 88px; background: #1abc9c; display: flex; align-items: center; padding: 0 38px 0 20px; }
.brand { color: #fff; font-size: 23.4px; letter-spacing: 0; flex: 1; }
.save, .add { width: 27px; height: 27px; margin-left: 40px; margin-bottom: 2px; }
.body { flex: 1; display: flex; }
.list { width: 614px; border: 1px solid #dfdfdf; border-width: 0 1px; }
.note { height: 80px; border-bottom: 1px solid #d9d9d9; border-radius: 0 0 5px 5px; display: flex; justify-content: space-between; padding: 26px 24px 0 25px; color: #212529; line-height: 26px; }
.note svg { width: 20px; height: 22px; margin-top: -1px; }
article { padding: 13px 0 0 40px; }
article h1 { font-size: 58px; font-weight: 400; line-height: 72px; letter-spacing: -1.5px; }
article p { line-height: 30px; margin-top: 12px; }
.sb { width: 21px; background: #f1f1f1; display: flex; flex-direction: column; align-items: center; padding: 9px 0 9px; }
.sb svg { width: 10px; height: 6px; }
.thumb { width: 17px; height: 852px; background: #c1c1c1; margin: 6px 0 11px; }

/* Taskbars */
.task { height: 50px; flex: none; display: flex; background: linear-gradient(90deg, #22383f 0, #213540 45%, #1b2741 85%, #1a2540); color: #fff; }
.c { width: 62px; height: 100%; display: flex; align-items: center; justify-content: center; position: relative; flex: none; }
.c svg { width: 30px; height: 30px; }
.c .s { width: 20px; height: 20px; }
.tv { padding-right: 3px; }
.start { width: 60px; }
.on::after { content: ""; position: absolute; bottom: 0; left: 6px; right: 5px; height: 3px; background: #76b9ed; }
.cur { background: #4f6068; }
.cur::after { left: 0; right: 0; }
.search { width: 429px; background: #f1f1f1; border: 1px solid #b7b9ba; display: flex; align-items: center; padding-left: 15px; color: #1c1c1c; font-size: 18.75px; letter-spacing: -.45px; }
.search svg { width: 20px; height: 20px; margin-right: 14px; }
.sun { width: 28px; height: 30px; margin: 14px 0 0 255px; }
.w1, .w2 { font-size: 17.5px; line-height: 52px; letter-spacing: -.4px; width: 45px; margin-left: 8px; }
.w2 { margin-left: 0; width: 74px; }
.tray { display: flex; align-items: center; flex: 1; border-right: 1px solid #6d7588; margin-right: 4px; }
.t1 { width: 16px; height: 9px; }
.t2 { width: 15px; height: 20px; margin-left: 26px; }
.t3 { width: 20px; height: 16px; margin-left: 21px; }
.t4 { width: 17px; height: 17px; margin-left: 23px; }
.t5 { width: 21px; height: 18px; margin-left: 20px; }
.clock { display: flex; flex-direction: column; align-items: center; line-height: 23px; padding-bottom: 3px; font-size: 15px; letter-spacing: -.5px; }
.tray .clock { width: 80px; margin-left: 11px; }
.t6 { width: 20px; height: 20px; margin-left: 17px; }
.t2r { height: 40px; }
.t2r .c { width: 49px; }
.t2r .q { width: 48px; }
.t2r .z { margin-right: 2.5px; }
.t2r .c svg { width: 24px; height: 24px; }
.t2r .c .s { width: 16px; height: 16px; }
.t2r .on::after { height: 2px; left: 4px; right: 5px; }
.t2r .cur::after { left: 0; right: 0; }
.t2r .clock { margin: 0 6px 0 auto; font-size: 12px; line-height: 19px; padding: 0; letter-spacing: -.35px; }

/* File explorer title and ribbon */
.right { font-size: 12px; letter-spacing: -.28px; color: #000; }
.title { height: 23px; display: flex; align-items: center; padding-left: 2px; flex: none; }
.title hr { width: 1px; height: 12px; background: #808080; margin-left: 11px; }
.q1, .q3 { width: 10px; height: 13px; }
.q2 { width: 12px; height: 14px; margin-left: 11px; }
.q3 { margin-left: 10px; }
.q4 { width: 14px; height: 15px; margin-left: 10px; }
.q5 { width: 6px; height: 4px; margin-left: 3px; }
.q6 { width: 8px; height: 6px; margin: 3px 0 0 7px; }
.title span { margin-left: 7px; }
.wc2 { margin: -3px 20px 0 auto; display: flex; gap: 36px; }
.wc2 svg { width: 10px; height: 10px; }
.rtabs { height: 24px; border-bottom: 1px solid #dadbdc; display: flex; flex: none; line-height: 23px; align-items: flex-start; color: #333; }
.rtabs b { font-weight: 400; background: #0063b1; color: #fff; width: 56px; height: 23px; text-align: center; }
.home { width: 58px; height: 24px; text-align: center; background: #f5f6f7; border: 1px solid #dadbdc; border-bottom: 0; line-height: 22px; }
.share { width: 60px; text-align: center; }
.vw { width: 53px; text-align: center; }
.col { width: 9px; height: 6px; margin: 8px 9px 0 auto; color: #888; }
.rtabs i { width: 16px; height: 16px; border-radius: 50%; background: #0063b1; color: #fff; font-weight: 700; line-height: 16px; text-align: center; margin: 3px 3px 0 0; }
.ribbon { height: 92px; flex: none; background: #f5f6f7; border-bottom: 1px solid #d5d6d7; display: flex; padding-top: 2px; color: #6f747a; letter-spacing: -.38px; }
.k { color: #222; }
.g { height: 86px; border-right: 1px solid #e0e1e3; display: flex; flex-direction: column; padding-left: 4px; }
.g1 { width: 263px; } .g2 { width: 191px; padding-left: 3px; } .g3 { width: 145px; } .g4 { width: 133px; } .g5 { width: 115px; padding-left: 0; }
.row { display: flex; height: 71px; }
.g em { color: #5a5d61; text-align: center; line-height: 16px; letter-spacing: -.2px; }
.big { display: flex; flex-direction: column; align-items: center; text-align: center; padding-top: 5px; line-height: 13px; flex: none; }
.big svg { width: 32px; height: 32px; margin-bottom: 3px; }
.big .nf { width: 20px; height: 28px; margin: 2px 0 5px; }
.big .ck { width: 22px; height: 30px; margin: 0 0 5px; }
.w70 { width: 70px; } .w38 { width: 38px; } .w48 { width: 48px; } .w42 { width: 42px; } .w46 { width: 46px; } .w40 { width: 40px; } .w56 { width: 56px; }
.vr { width: 1px; height: 55px; background: #dcdddf; margin: 7px 3px 0 4px; }
.d { display: inline-block; border: 3px solid transparent; border-top: 3px solid currentColor; border-bottom: 0; vertical-align: 3px; margin-left: 1px; }
.big .d { opacity: .8; }
.smalls { padding-top: 2px; }
.smalls div { height: 22px; display: flex; align-items: center; gap: 4px; }
.smalls svg { width: 15px; height: 15px; }
.smalls .d { margin-left: 0; }
.p5 { padding-left: 5px; } .p8 { padding-left: 7px; }
.n div { gap: 2px; }

/* Navigation bar */
.addr { height: 42px; display: flex; flex: none; padding: 5px 0 6px 14px; align-items: center; color: #666; }
.a1, .a2 { width: 12px; height: 11px; }
.a2 { color: #ccc; margin-left: 17px; transform: scaleX(-1); }
.a3 { width: 7px; height: 5px; margin-left: 13px; }
.a4 { width: 13px; height: 12px; transform: rotate(90deg); margin-left: 12px; }
.path { width: 1643px; height: 30px; border: 1px solid #d9d9d9; margin-left: 7px; display: flex; align-items: center; padding-left: 4px; color: #000; }
.path span, .sbox span { padding-bottom: 2px; }
.pf { width: 10px; height: 14px; }
.path s { width: 5px; height: 5px; border: solid #777; border-width: 1.5px 1.5px 0 0; transform: rotate(45deg); margin: 0 10px 0 0; }
.path .pf + s { margin-left: 10px; }
.p1 { width: 47px; } .p2 { width: 51px; } .p3 { width: 63px; } .p4 { width: 100px; }
.pd { width: 10px; height: 6px; margin: 0 10px 0 auto; color: #666; }
.rf { width: 31px; height: 28px; border-left: 1px solid #d9d9d9; display: flex; align-items: center; justify-content: center; }
.rf svg { width: 11px; height: 12px; }
.sbox { width: 148px; height: 30px; border: 1px solid #d9d9d9; margin-left: 11px; display: flex; align-items: center; color: #6d6d6d; padding-left: 14px; }
.sbox svg { width: 12px; height: 12px; margin-right: 14px; }

/* Folder tree and file list */
.main { flex: 1; display: flex; min-height: 0; }
.tree { width: 207px; padding-top: 8px; flex: none; }
.tree div { height: 24px; display: flex; align-items: center; padding: 0 0 2px 24px; width: 206px; }
.tree svg { width: 15px; height: 14px; margin: 2px 6px 0 0; }
.tree .r svg { width: 16px; margin-right: 5px; }
.tree .r .od { height: 11px; }
.tree .f { padding-left: 34px; }
.tree .f svg { width: 10px; height: 14px; margin-right: 9px; }
.tree .o { padding-left: 32px; }
.tree .gap { margin-top: 8px; }
.tree .sel { background: #d9d9d9; }
.tsb { width: 16px; height: 837px; background: #f0f0f0; display: flex; flex-direction: column; align-items: center; padding: 6px 1px 6px 0; color: #555; flex: none; }
.tsb svg { width: 9px; height: 6px; }
.tsb div { width: 15px; height: 636px; background: #cdcdcd; margin: 172px 0 auto; }
.files { flex: 1; border-left: 1px solid #f3f3f3; margin-left: 2px; }
.cols { display: flex; height: 25px; color: #4c607a; line-height: 25px; padding-left: 12px; }
.cb { width: 13px; height: 13px; border: 1px solid #333; margin-top: 6px; }
.c1, .c2, .c3, .c4 { border-right: 1px solid #e2e2e2; position: relative; }
.c1 { width: 248px; padding-left: 10px; }
.c1 svg { position: absolute; left: 113px; top: 0; width: 9px; height: 5px; color: #888; }
.c2 { width: 144px; padding-left: 6px; } .c3 { width: 120px; padding-left: 6px; } .c4 { width: 80px; padding-left: 6px; }
.files p { color: #6d6d6d; text-align: center; line-height: 18px; padding-top: 14px; }
.status { height: 21px; flex: none; display: flex; align-items: center; padding-left: 14px; color: #1e395b; }
.status span { width: 48px; padding-bottom: 2px; }
.status hr { width: 1px; height: 12px; background: #e4e4e4; margin: 0; }
.v1 { margin: 0 4px 0 auto; width: 22px; height: 20px; background: #cce8f6; border: 1px solid #26a0da; display: flex; align-items: center; justify-content: center; }
.v1 svg { width: 14px; height: 11px; }
.v2 { width: 12px; height: 10px; margin-right: 9px; }
.wh { color: #fff; }
```
